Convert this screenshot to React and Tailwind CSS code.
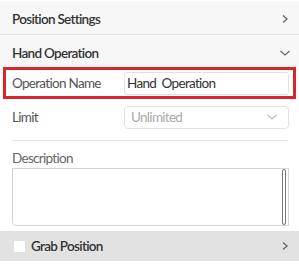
import React from "react";

const ChevronRight = () => (
  <svg width="8" height="10" viewBox="0 0 8 10" fill="none" stroke="#666" strokeWidth="1.3">
    <path d="M2 1.5 L6 5 L2 8.5" />
  </svg>
);

const ChevronDown = ({ color = "#666" }) => (
  <svg width="12" height="8" viewBox="0 0 12 8" fill="none" stroke={color} strokeWidth="1.2">
    <path d="M1.5 2 L6 6 L10.5 2" />
  </svg>
);

export default function App() {
  return (
    <div
      className="w-[299px] h-[266px] bg-white overflow-hidden text-[13.5px] tracking-[-0.7px]"
      style={{ fontFamily: "Lato, 'Noto Sans', sans-serif" }}
    >
      <div className="h-[34px] mt-[1px] pt-[3px] bg-[#f7f7f7] border-b border-[#e4e4e4] flex items-center justify-between pl-[12px] pr-[10px]">
        <span className="font-semibold text-[#333]">Position Settings</span>
        <ChevronRight />
      </div>
      <div className="h-[32px] pt-[4px] bg-[#f7f7f7] flex items-center justify-between pl-[12px] pr-[8px]">
        <span className="font-semibold text-[#333]">Hand Operation</span>
        <ChevronDown />
      </div>

      <div className="mx-[3px] h-[32px] border-[3px] border-[#d8262c] flex items-center pl-[6px] pr-[4px]">
        <span className="w-[112px] text-[#555]">Operation Name</span>
        <div className="flex-1 h-[23px] border border-[#e2e2e2] rounded-[3px] flex items-center px-[2px] text-[#333]">
          Hand&nbsp; Operation
        </div>
      </div>

      <div className="h-[32px] flex items-center pl-[12px] pr-[10px] mt-[2px]">
        <span className="w-[112px] text-[#555]">Limit</span>
        <div className="flex-1 h-[23px] border border-[#e2e2e2] rounded-[4px] flex items-center justify-between pl-[6px] pr-[10px] text-[#aaa]">
          <span>Unlimited</span>
          <ChevronDown color="#bbb" />
        </div>
      </div>

      <div className="mx-[12px] mr-[11px] mt-[7px] border-t border-[#e6e6e6]" />

      <div className="px-[12px] pr-[10px] pt-[9px]">
        <div className="text-[#666] leading-[16px]">Description</div>
        <div className="mt-[2px] h-[58px] border border-[#d4d4d4] rounded-bl-[4px] flex justify-end">
          <div className="w-[4px] h-full border border-[#777] rounded-full mr-[2px]" />
        </div>
      </div>

      <div className="mt-[5px] h-[30px] bg-[#e2e2e2] flex items-center justify-between pl-[14px] pr-[10px]">
        <div className="flex items-center gap-[6px]">
          <div className="w-[11px] h-[11px] bg-white" />
          <span className="font-semibold text-[#333]">Grab Position</span>
        </div>
        <ChevronRight />
      </div>
    </div>
  );
}
